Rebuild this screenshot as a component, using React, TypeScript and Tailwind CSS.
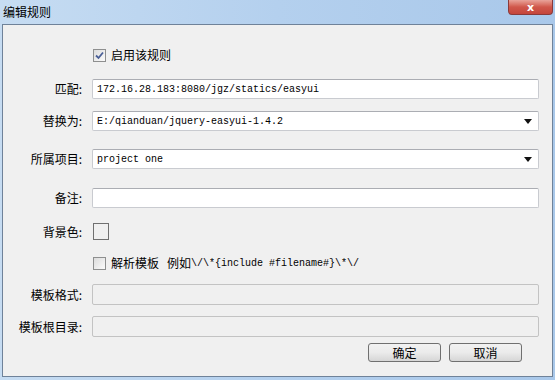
import { useState } from "react";

const cjk = "font-['Microsoft_YaHei','Noto_Sans_CJK_SC',sans-serif]";
const mono = "font-['Liberation_Mono','Noto_Sans_CJK_SC',monospace]";

function Label({ text }: { text: string }) {
  return (
    <div className={`w-[79px] shrink-0 text-right text-[12px] text-black ${cjk}`}>{text}</div>
  );
}

function TextBox({ value, disabled, select }: { value?: string; disabled?: boolean; select?: boolean }) {
  return (
    <div
      className={`ml-[10px] mr-[13px] flex-1 h-full flex items-center rounded-[2px] border ${
        disabled ? "bg-[#f0f0f0] border-[#c3c3c3]" : "bg-white border-[#c9cbd0] border-t-[#abadb3]"
      }`}
    >
      <span className={`flex-1 pl-[4px] text-[10px] text-black ${mono}`}>{value}</span>
      {select && (
        <svg width="8" height="5" viewBox="0 0 8 5" className="mr-[6px]">
          <path d="M0 0 L8 0 L4 5 Z" fill="#111" />
        </svg>
      )}
    </div>
  );
}

function Check({ checked }: { checked: boolean }) {
  return (
    <div className="w-[13px] h-[13px] border border-[#8e8f8f] bg-gradient-to-br from-[#dcdcdc] to-[#fbfbfb] flex items-center justify-center">
      {checked && (
        <svg width="9" height="9" viewBox="0 0 9 9">
          <path d="M1 4.5 L3.5 7 L8 1.5" stroke="#4a5f97" strokeWidth="1.8" fill="none" />
        </svg>
      )}
    </div>
  );
}

function Btn({ text }: { text: string }) {
  return (
    <button
      className={`w-[73px] h-[19px] rounded-[3px] border border-[#707070] bg-gradient-to-b from-[#f2f2f2] via-[#ebebeb] to-[#d6d6d6] text-[12px] leading-none text-black ${cjk}`}
    >
      {text}
    </button>
  );
}

export default function App() {
  const [enabled] = useState(true);
  return (
    <div className="w-[555px] h-[380px] bg-gradient-to-r from-[#c6dcf2] via-[#b4d0ee] to-[#a9c8ea] flex flex-col overflow-hidden">
      <div className="h-[24px] shrink-0 flex items-start justify-between">
        <span className={`pl-[3px] pt-[3px] text-[12px] text-black ${cjk}`}>编辑规则</span>
        <div className="mr-[2px] w-[45px] h-[15px] rounded-b-[4px] border border-t-0 border-[#8a3a3a] bg-gradient-to-b from-[#e8a39a] via-[#d0574b] to-[#c4463c] flex items-center justify-center">
          <span className="text-white text-[11px] font-bold leading-none font-['DejaVu_Sans',sans-serif]">x</span>
        </div>
      </div>
      <div className="flex-1 mx-[2px] mb-[3px] border border-[#6f8299] bg-[#f0f0f0] flex flex-col">
        <div className="mt-[20px] h-[20px] flex items-center">
          <div className="w-[90px]" />
          <Check checked={enabled} />
          <span className={`ml-[5px] text-[12px] text-black ${cjk}`}>启用该规则</span>
        </div>
        <div className="mt-[14px] h-[20px] flex items-center">
          <Label text="匹配:" />
          <TextBox value="172.16.28.183:8080/jgz/statics/easyui" />
        </div>
        <div className="mt-[12px] h-[20px] flex items-center">
          <Label text="替换为:" />
          <TextBox value="E:/qianduan/jquery-easyui-1.4.2" select />
        </div>
        <div className="mt-[18px] h-[20px] flex items-center">
          <Label text="所属项目:" />
          <TextBox value="project one" select />
        </div>
        <div className="mt-[19px] h-[20px] flex items-center">
          <Label text="备注:" />
          <TextBox />
        </div>
        <div className="mt-[15px] h-[17px] flex items-center">
          <Label text="背景色:" />
          <div className="ml-[11px] w-[16px] h-[17px] border border-[#707070]" />
        </div>
        <div className="mt-[13px] h-[20px] flex items-center">
          <div className="w-[90px]" />
          <Check checked={false} />
          <span className={`ml-[5px] text-[12px] text-black ${cjk}`}>解析模板</span>
          <span className={`ml-[8px] text-[12px] text-black ${cjk}`}>例如</span>
          <span className={`text-[10px] text-black ${mono}`}>{"\\/\\*{include #filename#}\\*\\/"}</span>
        </div>
        <div className="mt-[11px] h-[21px] flex items-center">
          <Label text="模板格式:" />
          <TextBox disabled />
        </div>
        <div className="mt-[11px] h-[21px] flex items-center">
          <Label text="模板根目录:" />
          <TextBox disabled />
        </div>
        <div className="mt-[6px] flex justify-end gap-[8px] pr-[30px]">
          <Btn text="确定" />
          <Btn text="取消" />
        </div>
      </div>
    </div>
  );
}
